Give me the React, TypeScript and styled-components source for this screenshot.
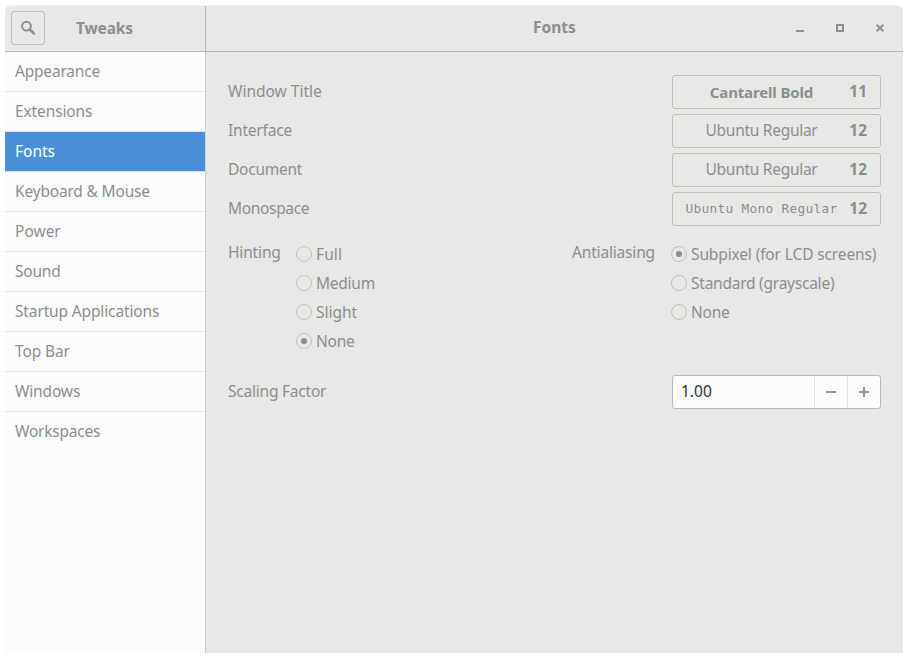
import React from 'react';
import styled, { createGlobalStyle, css } from 'styled-components';

const GlobalStyle = createGlobalStyle`
  *, *::before, *::after { box-sizing: border-box; }
  html, body { margin: 0; background: #fff; overflow: hidden; }
  body { font-family: "Noto Sans", sans-serif; font-size: 15.5px; line-height: 20px; color: #8b8e8f; }
  button, input { font: inherit; color: inherit; }
`;

const Window = styled.div`
  width: 898px;
  height: 648px;
  margin: 5px 0 0 5px;
  display: grid;
  grid-template-columns: 201px 1fr;
  grid-template-rows: 47px 1fr;
  background: #e8e8e6;
  border-radius: 6px 6px 0 0;
  border-top: 1px solid #f4f4f3;
  overflow: hidden;
`;

const SideHeader = styled.header`
  display: flex;
  align-items: center;
  height: 46px;
  padding: 0 6px 1px;
  border-right: 1px solid #b8b8b6;
  border-bottom: 1px solid #b8b8b6;
`;

const MainHeader = styled.header`
  display: flex;
  align-items: center;
  height: 46px;
  padding-bottom: 2px;
  border-bottom: 1px solid #b8b8b6;
`;

const SearchButton = styled.button`
  width: 34px;
  height: 34px;
  padding: 0;
  border: 1px solid #c0c0bd;
  border-radius: 3px;
  background: transparent;
  display: grid;
  place-items: center;
`;

const Title = styled.h1<{ $offset: number }>`
  margin: 0 0 1px ${p => p.$offset}px;
  font-size: 15.5px;
  font-weight: 700;
  white-space: nowrap;
`;

const Fit = styled.span<{ $ls?: number }>`
  letter-spacing: ${p => p.$ls ?? 0}px;
  white-space: nowrap;
`;

const WindowControls = styled.div`
  display: flex;
  margin-left: auto;
  padding-right: 3px;
`;

const ControlButton = styled.button`
  width: 40px;
  height: 40px;
  padding: 0;
  border: 0;
  background: transparent;
  display: grid;
  place-items: center;
`;

const Sidebar = styled.nav`
  margin-top: -1px;
  background: #fcfcfc;
  border-right: 1px solid #cfcfd0;
`;

const NavRow = styled.div<{ $active?: boolean; $last?: boolean }>`
  height: 40px;
  padding: 9px 10px;
  border-bottom: 1px solid ${p => (p.$last ? 'transparent' : '#e1e1e1')};
  background-clip: padding-box;
  ${p => p.$active && css`
    background-color: #4a90d9;
    color: #fff;
  `}
`;

const Content = styled.main`
  margin-top: -1px;
  padding: 23px 22px 0;
`;

const Setting = styled.div`
  display: flex;
  justify-content: space-between;
  height: 34px;
  margin-bottom: 5px;
`;

const Label = styled.span`
  padding-top: 6px;
`;

const FontButton = styled.button`
  width: 209px;
  height: 34px;
  padding: 0 13px 2px 12px;
  border: 1px solid #c0c0bd;
  border-radius: 3px;
  background: transparent;
  display: flex;
  align-items: center;
`;

const FontName = styled.span<{ $kind?: 'bold' | 'mono' }>`
  flex: 1;
  text-align: center;
  ${p => p.$kind === 'bold' && css`
    font-weight: 700;
    font-size: 15px;
    padding-top: 1px;
  `}
  ${p => p.$kind === 'mono' && css`
    font-family: "DejaVu Sans Mono", monospace;
    font-size: 12.8px;
    padding-top: 2px;
  `}
`;

const FontSize = styled.span`
  width: 20px;
  margin-left: 9px;
  text-align: right;
  font-weight: 700;
`;

const Choices = styled.section`
  display: grid;
  grid-template-columns: 68px 276px 99px 1fr;
  margin-top: 10px;
  height: 139px;
`;

const RadioList = styled.div`
  display: flex;
  flex-direction: column;
  gap: 9px;
  padding-top: 8px;
`;

const RadioRow = styled.label`
  display: flex;
  align-items: center;
  gap: 4px;
  height: 20px;
`;

const Dial = styled.span<{ $on?: boolean }>`
  width: 16px;
  height: 16px;
  flex: none;
  border: 1px solid #c0c0bd;
  border-radius: 50%;
  display: grid;
  place-items: center;
  ${p => p.$on && css`
    &::after {
      content: "";
      width: 6px;
      height: 6px;
      border-radius: 50%;
      background: #8b8e8f;
    }
  `}
`;

const SpinBox = styled.div`
  display: grid;
  grid-template-columns: 1fr 33px 33px;
  width: 209px;
  height: 34px;
  border: 1px solid #bcbcb6;
  border-radius: 3px;
  background: #fcfcfc;
  overflow: hidden;
`;

const SpinValue = styled.span`
  padding: 5px 8px;
  color: #2e3436;
`;

const SpinButton = styled.button`
  padding: 0;
  border: 0;
  border-left: 1px solid #e3e3e3;
  background: transparent;
  display: grid;
  place-items: center;
`;

const navItems: [string, number][] = [
  ['Appearance', -0.2], ['Extensions', -0.12], ['Fonts', 0], ['Keyboard & Mouse', -0.18],
  ['Power', 0], ['Sound', -0.2], ['Startup Applications', -0.14], ['Top Bar', -0.12],
  ['Windows', -0.15], ['Workspaces', -0.22],
];

type FontRow = { label: string; ls: number; font: string; fls: number; size: number; kind?: 'bold' | 'mono' };
const fonts: FontRow[] = [
  { label: 'Window Title', ls: 0, font: 'Cantarell Bold', fls: -0.14, size: 11, kind: 'bold' },
  { label: 'Interface', ls: -0.2, font: 'Ubuntu Regular', fls: -0.28, size: 12 },
  { label: 'Document', ls: -0.25, font: 'Ubuntu Regular', fls: -0.28, size: 12 },
  { label: 'Monospace', ls: -0.33, font: 'Ubuntu Mono Regular', fls: 0.3, size: 12, kind: 'mono' },
];

type Option = [string, number, boolean?];
const hinting: Option[] = [['Full', 0.1], ['Medium', -0.25], ['Slight', 0], ['None', -0.25, true]];
const antialiasing: Option[] = [['Subpixel (for LCD screens)', -0.13, true], ['Standard (grayscale)', -0.24], ['None', -0.25]];

function Radios({ options }: { options: Option[] }) {
  return (
    <RadioList>
      {options.map(([text, ls, on]) => (
        <RadioRow key={text}>
          <Dial $on={on} />
          <Fit $ls={ls}>{text}</Fit>
        </RadioRow>
      ))}
    </RadioList>
  );
}

export default function App() {
  return (
    <>
      <GlobalStyle />
      <Window>
        <SideHeader>
          <SearchButton aria-label="Search">
            <svg width="16" height="16" viewBox="0 0 16 16" fill="none" stroke="#8b8e8f">
              <circle cx="6.5" cy="6.2" r="4.4" strokeWidth="2" />
              <path d="M9.8 9.5L14 13.7" strokeWidth="2.5" strokeLinecap="round" />
            </svg>
          </SearchButton>
          <Title $offset={31}><Fit $ls={-0.15}>Tweaks</Fit></Title>
        </SideHeader>
        <MainHeader>
          <Title $offset={327}><Fit>Fonts</Fit></Title>
          <WindowControls>
            <ControlButton aria-label="Minimize">
              <svg width="16" height="16" viewBox="0 0 16 16" fill="#8b8e8f"><path d="M4 10h8v2H4z" /></svg>
            </ControlButton>
            <ControlButton aria-label="Maximize">
              <svg width="16" height="16" viewBox="0 0 16 16" fill="none" stroke="#8b8e8f" strokeWidth="2"><path d="M5 5h6v6H5z" /></svg>
            </ControlButton>
            <ControlButton aria-label="Close">
              <svg width="16" height="16" viewBox="0 0 16 16" fill="none" stroke="#8b8e8f" strokeWidth="2"><path d="M4.6 4.6l6.8 6.8M11.4 4.6l-6.8 6.8" /></svg>
            </ControlButton>
          </WindowControls>
        </MainHeader>
        <Sidebar>
          {navItems.map(([name, ls], i) => (
            <NavRow key={name} $active={name === 'Fonts'} $last={i === navItems.length - 1}>
              <Fit $ls={ls}>{name}</Fit>
            </NavRow>
          ))}
        </Sidebar>
        <Content>
          {fonts.map(row => (
            <Setting key={row.label}>
              <Label><Fit $ls={row.ls}>{row.label}</Fit></Label>
              <FontButton>
                <FontName $kind={row.kind}><Fit $ls={row.fls}>{row.font}</Fit></FontName>
                <FontSize>{row.size}</FontSize>
              </FontButton>
            </Setting>
          ))}
          <Choices>
            <Label><Fit $ls={-0.15}>Hinting</Fit></Label>
            <Radios options={hinting} />
            <Label><Fit $ls={-0.17}>Antialiasing</Fit></Label>
            <Radios options={antialiasing} />
          </Choices>
          <Setting>
            <Label><Fit $ls={-0.22}>Scaling Factor</Fit></Label>
            <SpinBox>
              <SpinValue>1.00</SpinValue>
              <SpinButton aria-label="Decrease">
                <svg width="16" height="16" viewBox="0 0 16 16" fill="#929595"><path d="M3 7h10v2H3z" /></svg>
              </SpinButton>
              <SpinButton aria-label="Increase">
                <svg width="16" height="16" viewBox="0 0 16 16" fill="#929595"><path d="M3 7h4V3h2v4h4v2H9v4H7V9H3z" /></svg>
              </SpinButton>
            </SpinBox>
          </Setting>
        </Content>
      </Window>
    </>
  );
}
